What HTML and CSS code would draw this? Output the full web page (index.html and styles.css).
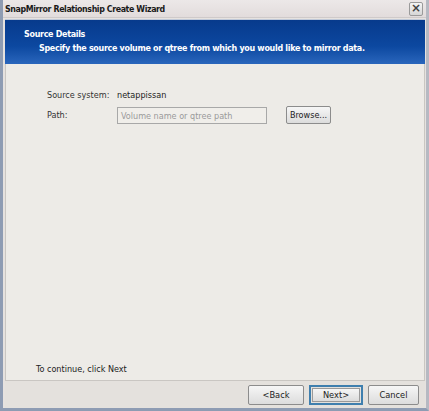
FILE: index.html
```html
<!DOCTYPE html>
<html>
<head>
<meta charset="utf-8">
<link rel="stylesheet" href="styles.css">
</head>
<body>
<div class="window">
  <div class="titlebar">
    <span class="title">SnapMirror Relationship Create Wizard</span>
    <span class="close">×</span>
  </div>
  <div class="frame">
    <div class="header">
      <div class="h-title">Source Details</div>
      <div class="h-sub">Specify the source volume or qtree from which you would like to mirror data.</div>
    </div>
    <div class="content">
      <div class="form">
        <div class="row">
          <span class="label">Source system:</span>
          <span class="value">netappissan</span>
        </div>
        <div class="row">
          <span class="label">Path:</span>
          <span class="input">Volume name or qtree path</span>
          <span class="btn browse">Browse...</span>
        </div>
      </div>
      <div class="hint">To continue, click Next</div>
    </div>
    <div class="footer">
      <span class="btn big">&lt;Back</span>
      <span class="focus"><span class="btn big inner">Next&gt;</span></span>
      <span class="btn big">Cancel</span>
    </div>
  </div>
</div>
</body>
</html>
```
FILE: styles.css
```css
* { box-sizing: border-box; }
html, body { margin: 0; padding: 0; }
body {
  width: 429px;
  height: 411px;
  overflow: hidden;
  font-family: "DejaVu Sans Condensed", "Liberation Sans", sans-serif;
  font-size: 9px;
  color: #222;
  background: #8e9bb0;
  white-space: nowrap;
}
.window {
  width: 429px;
  height: 411px;
  display: flex;
  flex-direction: column;
  background: #e6e2df;
  border-left: 3px solid #8e9cb3;
  border-right: 3px solid #b6b9c2;
  border-bottom: 3px solid #8e9cb3;
}
.titlebar {
  height: 18px;
  display: flex;
  align-items: center;
  justify-content: space-between;
  padding: 0 3px 0 2px;
  background: linear-gradient(#ece8e8, #e2dcdc);
  border-bottom: 1px solid #cfcaca;
}
.title {
  font-weight: bold;
  font-size: 8.8px;
  letter-spacing: -0.4px;
  color: #1a1a1a;
}
.close {
  width: 14px;
  height: 14px;
  border: 1px solid #9a9a9a;
  border-radius: 2px;
  background: linear-gradient(#f4f4f4, #d6d6d6);
  font-size: 12px;
  line-height: 11px;
  text-align: center;
  color: #444;
  font-weight: bold;
  font-family: "DejaVu Sans", sans-serif;
}
.frame {
  flex: 1;
  display: flex;
  flex-direction: column;
  padding: 1px 1px 0 2px;
}
.header {
  height: 45px;
  background: linear-gradient(#073a8c, #0c48a0 60%, #2a66bc);
  border-top: 1px solid #bfc8d8;
  color: #fff;
  padding: 8px 0 0 19px;
  font-weight: bold;
}
.h-title { font-size: 8.9px; line-height: 13px; letter-spacing: -0.3px; }
.h-sub { font-size: 8.9px; line-height: 13px; margin: 1px 0 0 15px; letter-spacing: -0.3px; }
.content {
  flex: 1;
  display: flex;
  flex-direction: column;
  justify-content: space-between;
  background: #edebe7;
  border: 1px solid #c9c6c2;
  border-top: none;
  padding: 22px 0 6px 30px;
}
.form { padding-left: 11px; display: flex; flex-direction: column; gap: 2px; }
.row { display: flex; align-items: center; height: 18px; }
.label { flex: none; width: 70px; color: #333; }
.value { color: #222; }
.input {
  flex: none;
  width: 150px;
  height: 17px;
  border: 1px solid #a8a8a8;
  background: #f0eeea;
  color: #9a9a9a;
  padding: 2px 0 0 3px;
  line-height: 12px;
}
.btn {
  display: inline-flex;
  align-items: center;
  justify-content: center;
  border: 1px solid #8c8c8c;
  border-radius: 2px;
  background: linear-gradient(#f6f6f6, #dcdcdc);
  color: #222;
}
.browse { flex: none; margin-left: 19px; width: 45px; height: 18px; }
.hint { color: #222; }
.footer {
  height: 27px;
  display: flex;
  justify-content: flex-end;
  align-items: center;
  gap: 5px;
  padding-right: 6px;
  background: #e4e1dd;
}
.big { width: 56px; height: 20px; font-size: 9.2px; }
.focus {
  border: 2px solid #3f7fae;
  padding: 1px;
  display: inline-flex;
}
.inner { width: 48px; height: 14px; border-radius: 0; border: 1px solid #9a9a9a; }
.focus + .btn { width: 51px; }
```
